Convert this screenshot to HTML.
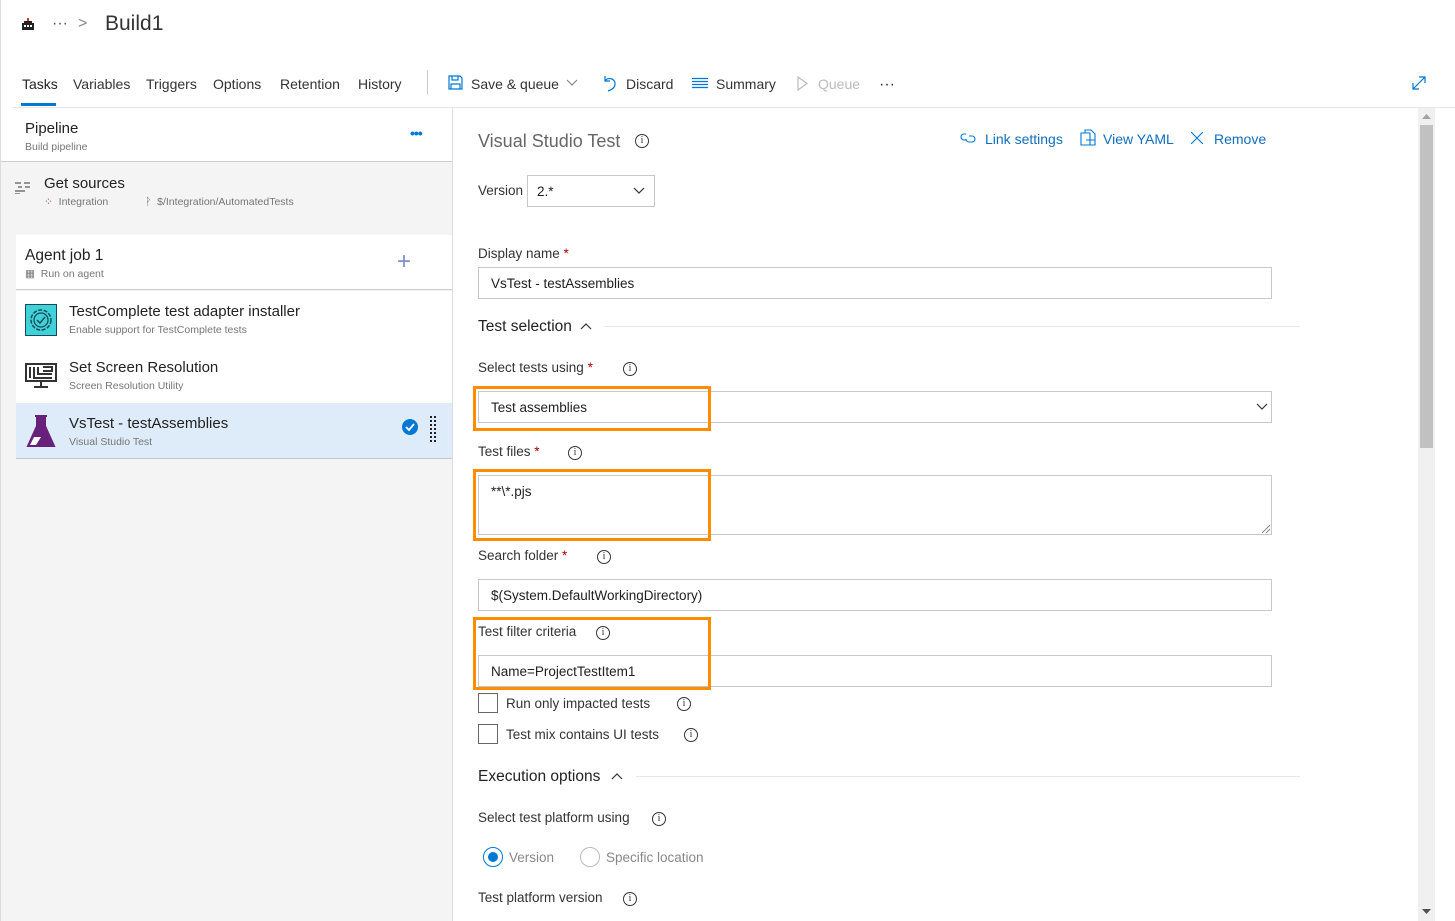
<!DOCTYPE html>
<html><head><meta charset="utf-8"><style>
*{box-sizing:border-box;margin:0;padding:0}
body{width:1455px;height:921px;position:relative;overflow:hidden;background:#fff;font-family:"Segoe UI","Liberation Sans",sans-serif;color:#212121;font-size:13.5px}
.a{position:absolute;white-space:nowrap}
.lbl{font-size:13.5px;color:#333}
.req{color:#a80000}
.info{position:absolute;width:14px;height:14px;border:1px solid #333;border-radius:50%;font-size:10px;line-height:12px;text-align:center;color:#333;font-family:"Liberation Serif",serif}
.inp{position:absolute;border:1px solid #c8c8c8;background:#fff;padding-left:12px;font-size:13.5px;color:#212121}
.ob{position:absolute;border:3px solid #ff8c00}
.sub{font-size:10.5px;color:#767676}
.blue{color:#106ebe}
</style></head><body>
<div class="a" style="left:0;top:0;width:1px;height:921px;background:#ddd"></div>
<svg class="a" style="left:21px;top:17px" width="14" height="14" viewBox="0 0 14 14"><rect x="1" y="6" width="12" height="7" fill="#222"/><rect x="3" y="8" width="2" height="2" fill="#fff"/><rect x="6" y="8" width="2" height="2" fill="#fff"/><rect x="9" y="8" width="2" height="2" fill="#fff"/><rect x="6" y="1" width="2" height="5" fill="#c33"/><rect x="3" y="4" width="8" height="2" fill="#222"/></svg>
<div class="a" style="left:52px;top:15px;font-size:16px;color:#555">···</div>
<div class="a" style="left:78px;top:15px;font-size:16px;color:#888">&gt;</div>
<div class="a" style="left:105px;top:12px;font-size:21px;color:#333">Build1</div>
<div class="a" style="left:22px;top:76px;font-size:14px;color:#222">Tasks</div>
<div class="a" style="left:21px;top:103px;width:35px;height:3px;background:#0078d4"></div>
<div class="a" style="left:73px;top:76px;font-size:14px;color:#333">Variables</div>
<div class="a" style="left:146px;top:76px;font-size:14px;color:#333">Triggers</div>
<div class="a" style="left:213px;top:76px;font-size:14px;color:#333">Options</div>
<div class="a" style="left:280px;top:76px;font-size:14px;color:#333">Retention</div>
<div class="a" style="left:358px;top:76px;font-size:14px;color:#333">History</div>
<div class="a" style="left:427px;top:70px;width:1px;height:25px;background:#ccc"></div>
<svg class="a" style="left:448px;top:75px" width="15" height="15" viewBox="0 0 15 15"><path d="M1 1h11l2 2v11H1z M4 1v4h6V1 M3 14V9h9v5" fill="none" stroke="#0078d4" stroke-width="1.2"/></svg>
<div class="a" style="left:471px;top:76px;font-size:14px;color:#333">Save &amp; queue</div>
<svg class="a" style="left:566px;top:79px" width="12" height="8"><path d="M1 1l5 5 5-5" fill="none" stroke="#888" stroke-width="1.2"/></svg>
<svg class="a" style="left:602px;top:74px" width="16" height="18" viewBox="0 0 16 18"><path d="M3 2v5h5 M3 7c3-4 10-3 10 3 0 4-4 6-7 7" fill="none" stroke="#0078d4" stroke-width="1.2"/></svg>
<div class="a" style="left:626px;top:76px;font-size:14px;color:#333">Discard</div>
<svg class="a" style="left:692px;top:77px" width="16" height="12"><path d="M0 1.5h16M0 4.5h16M0 7.5h16M0 10.5h16" stroke="#0078d4" stroke-width="1.2"/></svg>
<div class="a" style="left:716px;top:76px;font-size:14px;color:#333">Summary</div>
<svg class="a" style="left:797px;top:76px" width="11" height="15"><path d="M1 1l9 6.5L1 14z" fill="none" stroke="#bbb" stroke-width="1.2"/></svg>
<div class="a" style="left:818px;top:76px;font-size:14px;color:#bbb">Queue</div>
<div class="a" style="left:879px;top:76px;font-size:16px;color:#333">···</div>
<svg class="a" style="left:1411px;top:75px" width="16" height="16"><path d="M2 14L14 2M8 2h6v6M2 8v6h6" fill="none" stroke="#0078d4" stroke-width="1.2"/></svg>
<div class="a" style="left:13px;top:107px;width:1442px;height:1px;background:#e6e6e6"></div>
<div class="a" style="left:1px;top:108px;width:451px;height:813px;background:#f4f4f4"></div>
<div class="a" style="left:1px;top:108px;width:451px;height:54px;background:#fff;border-bottom:1px solid #ccc"></div>
<div class="a" style="left:452px;top:108px;width:1px;height:813px;background:#ddd"></div>
<div class="a" style="left:25px;top:120px;font-size:15px;color:#222">Pipeline</div>
<div class="a sub" style="left:25px;top:141px">Build pipeline</div>
<div class="a" style="left:410px;top:125px;font-size:14px;color:#0078d4;font-weight:bold;letter-spacing:-1px">•••</div>
<svg class="a" style="left:15px;top:182px" width="15" height="12"><path d="M0 1h6M9 1h6M3 5h4M10 5h5M0 9h10M0 12h5" stroke="#333" stroke-width="1"/></svg>
<div class="a" style="left:44px;top:175px;font-size:15px;color:#222">Get sources</div>
<div class="a sub" style="left:44px;top:196px"><span style="color:#8a3cb0">⁘</span>&nbsp; Integration</div>
<div class="a sub" style="left:145px;top:196px">ᚹ&nbsp; $/Integration/AutomatedTests</div>
<div class="a" style="left:16px;top:235px;width:436px;height:55px;background:#fff;border-bottom:1px solid #ccc"></div>
<div class="a" style="left:25px;top:247px;font-size:15.5px;color:#222">Agent job 1</div>
<div class="a sub" style="left:25px;top:268px">▦&nbsp; Run on agent</div>
<div class="a" style="left:397px;top:248px;font-size:24px;color:#7a8fd0;font-weight:200;line-height:28px">+</div>
<div class="a" style="left:16px;top:291px;width:436px;height:112px;background:#fff"></div>
<svg class="a" style="left:25px;top:304px" width="32" height="32"><rect x="0.5" y="0.5" width="31" height="31" fill="#3fd3d9" stroke="#1a4a5a"/><circle cx="16" cy="16" r="10" fill="none" stroke="#1a4a5a" stroke-width="1.5" stroke-dasharray="4 1.5"/><circle cx="16" cy="16" r="7" fill="none" stroke="#1a4a5a" stroke-width="1.3"/><path d="M12 16l3 3 5-6" fill="none" stroke="#1a4a5a" stroke-width="1.5"/></svg>
<div class="a" style="left:69px;top:303px;font-size:15px;color:#222">TestComplete test adapter installer</div>
<div class="a sub" style="left:69px;top:324px">Enable support for TestComplete tests</div>
<svg class="a" style="left:25px;top:363px" width="32" height="26"><path d="M1 1h30v17H1z" fill="none" stroke="#333" stroke-width="2"/><path d="M5 4v11M9 4v11h18M13 4v7h14M18 4h9v4h-9" fill="none" stroke="#333" stroke-width="2"/><path d="M16 18v5M9 24h14" stroke="#333" stroke-width="2"/></svg>
<div class="a" style="left:69px;top:359px;font-size:15px;color:#222">Set Screen Resolution</div>
<div class="a sub" style="left:69px;top:380px">Screen Resolution Utility</div>
<div class="a" style="left:16px;top:403px;width:436px;height:56px;background:#deecf9;border-bottom:1px solid #c8c8c8"></div>
<svg class="a" style="left:26px;top:415px" width="30" height="33"><path d="M9 1h12M11 1v10L2 31h26L19 11V1" fill="#68217a" stroke="#68217a" stroke-width="2"/><path d="M8 22L4 30h6l5-8z" fill="#fff"/></svg>
<div class="a" style="left:69px;top:415px;font-size:15px;color:#222">VsTest - testAssemblies</div>
<div class="a sub" style="left:69px;top:436px">Visual Studio Test</div>
<svg class="a" style="left:402px;top:419px" width="16" height="16"><circle cx="8" cy="8" r="8" fill="#0078d4"/><path d="M4 8l3 3 5-6" fill="none" stroke="#fff" stroke-width="1.8"/></svg>
<svg class="a" style="left:430px;top:416px" width="8" height="28"><g fill="#222"><rect x="0" y="0" width="2" height="2"/><rect x="4" y="0" width="2" height="2"/><rect x="0" y="4" width="2" height="2"/><rect x="4" y="4" width="2" height="2"/><rect x="0" y="8" width="2" height="2"/><rect x="4" y="8" width="2" height="2"/><rect x="0" y="12" width="2" height="2"/><rect x="4" y="12" width="2" height="2"/><rect x="0" y="16" width="2" height="2"/><rect x="4" y="16" width="2" height="2"/><rect x="0" y="20" width="2" height="2"/><rect x="4" y="20" width="2" height="2"/><rect x="0" y="24" width="2" height="2"/><rect x="4" y="24" width="2" height="2"/></g></svg>
<div class="a" style="left:478px;top:131px;font-size:18px;color:#666">Visual Studio Test</div>
<div class="info" style="left:635px;top:134px">i</div>
<svg class="a" style="left:960px;top:131px" width="17" height="13"><path d="M6 3H4a3 3 0 000 6h3M9 5h3a3 3 0 010 6H9a3 3 0 01-3-3" fill="none" stroke="#0078d4" stroke-width="1.1"/></svg>
<div class="a blue" style="left:985px;top:131px;font-size:14px">Link settings</div>
<svg class="a" style="left:1080px;top:129px" width="16" height="17"><path d="M1 4h9v12H1z M5 4V1h6l4 4v6M6 11h9v5H6" fill="none" stroke="#0078d4" stroke-width="1.1"/></svg>
<div class="a blue" style="left:1103px;top:131px;font-size:14px">View YAML</div>
<svg class="a" style="left:1191px;top:132px" width="12" height="12"><path d="M0 0l12 12M12 0L0 12" stroke="#0078d4" stroke-width="1.1"/></svg>
<div class="a blue" style="left:1214px;top:131px;font-size:14px">Remove</div>
<div class="a lbl" style="left:478px;top:183px">Version</div>
<div class="inp" style="left:527px;top:175px;width:128px;height:32px;line-height:31px;padding-left:9px">2.*</div>
<svg class="a" style="left:633px;top:187px" width="12" height="8"><path d="M1 1l5 5 5-5" fill="none" stroke="#333" stroke-width="1.2"/></svg>
<div class="a lbl" style="left:478px;top:246px">Display name <span class="req">*</span></div>
<div class="inp" style="left:478px;top:267px;width:794px;height:32px;line-height:32px">VsTest - testAssemblies</div>
<div class="a" style="left:478px;top:318px;font-size:15.5px;color:#222">Test selection</div>
<svg class="a" style="left:580px;top:322px" width="12" height="8"><path d="M1 7l5-5 5 5" fill="none" stroke="#333" stroke-width="1.2"/></svg>
<div class="a" style="left:605px;top:326px;width:695px;height:1px;background:#e6e6e6"></div>
<div class="a lbl" style="left:478px;top:360px">Select tests using <span class="req">*</span></div>
<div class="info" style="left:623px;top:362px">i</div>
<div class="inp" style="left:478px;top:391px;width:794px;height:32px;line-height:32px">Test assemblies</div>
<svg class="a" style="left:1256px;top:403px" width="12" height="8"><path d="M1 1l5 5 5-5" fill="none" stroke="#333" stroke-width="1.2"/></svg>
<div class="ob" style="left:473px;top:386px;width:238px;height:45px"></div>
<div class="a lbl" style="left:478px;top:444px">Test files <span class="req">*</span></div>
<div class="info" style="left:568px;top:446px">i</div>
<div class="inp" style="left:478px;top:475px;width:794px;height:60px;padding-top:8px">**\*.pjs</div>
<svg class="a" style="left:1262px;top:525px" width="8" height="8"><path d="M0 8L8 0M4 8L8 4" stroke="#888"/></svg>
<div class="ob" style="left:473px;top:469px;width:238px;height:72px"></div>
<div class="a lbl" style="left:478px;top:548px">Search folder <span class="req">*</span></div>
<div class="info" style="left:597px;top:550px">i</div>
<div class="inp" style="left:478px;top:579px;width:794px;height:32px;line-height:32px">$(System.DefaultWorkingDirectory)</div>
<div class="a lbl" style="left:478px;top:624px">Test filter criteria</div>
<div class="info" style="left:596px;top:626px">i</div>
<div class="inp" style="left:478px;top:655px;width:794px;height:32px;line-height:32px">Name=ProjectTestItem1</div>
<div class="ob" style="left:473px;top:617px;width:238px;height:73px"></div>
<div class="a" style="left:478px;top:693px;width:20px;height:20px;border:1px solid #666;background:#fff"></div>
<div class="a lbl" style="left:506px;top:696px">Run only impacted tests</div>
<div class="info" style="left:677px;top:697px">i</div>
<div class="a" style="left:478px;top:724px;width:20px;height:20px;border:1px solid #666;background:#fff"></div>
<div class="a lbl" style="left:506px;top:727px">Test mix contains UI tests</div>
<div class="info" style="left:684px;top:728px">i</div>
<div class="a" style="left:478px;top:768px;font-size:15.5px;color:#222">Execution options</div>
<svg class="a" style="left:611px;top:772px" width="12" height="8"><path d="M1 7l5-5 5 5" fill="none" stroke="#333" stroke-width="1.2"/></svg>
<div class="a" style="left:636px;top:776px;width:664px;height:1px;background:#e6e6e6"></div>
<div class="a lbl" style="left:478px;top:810px">Select test platform using</div>
<div class="info" style="left:652px;top:812px">i</div>
<div class="a" style="left:483px;top:847px;width:20px;height:20px;border:1px solid #0078d4;border-radius:50%"></div>
<div class="a" style="left:488px;top:852px;width:10px;height:10px;background:#0078d4;border-radius:50%"></div>
<div class="a" style="left:509px;top:850px;color:#888">Version</div>
<div class="a" style="left:580px;top:847px;width:20px;height:20px;border:1px solid #bbb;border-radius:50%"></div>
<div class="a" style="left:606px;top:850px;color:#888">Specific location</div>
<div class="a lbl" style="left:478px;top:890px">Test platform version</div>
<div class="info" style="left:623px;top:892px">i</div>
<div class="a" style="left:1418px;top:108px;width:17px;height:813px;background:#f0f0f0"></div>
<div class="a" style="left:1420px;top:125px;width:13px;height:323px;background:#c1c1c1"></div>
<svg class="a" style="left:1422px;top:114px" width="9" height="5"><path d="M0 5L4.5 0 9 5z" fill="#a3a3a3"/></svg>
<svg class="a" style="left:1422px;top:909px" width="9" height="5"><path d="M0 0L4.5 5 9 0z" fill="#505050"/></svg>
</body></html>
